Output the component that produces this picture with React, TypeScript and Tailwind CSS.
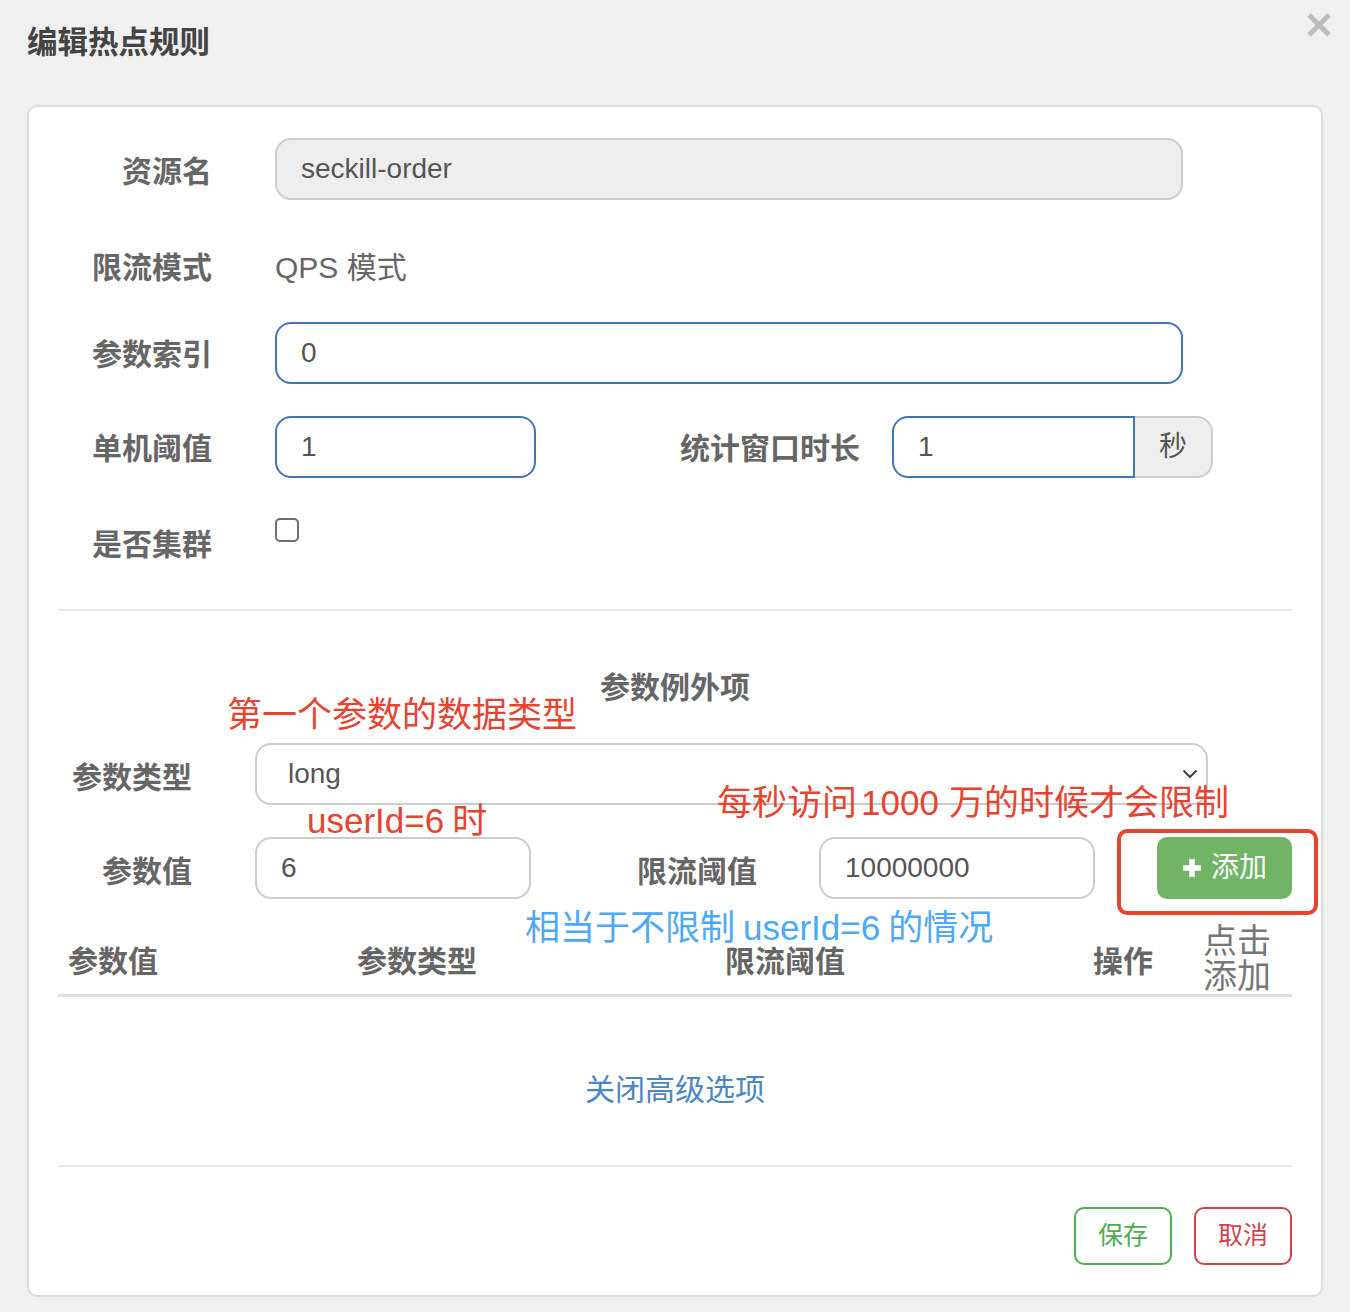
import React from 'react'

const labelCls = 'text-[30px] leading-[40px] font-bold text-[#666] text-right'
const inputBase = 'h-[62px] rounded-[16px] border-2 px-[24px] text-[28px] text-[#555] flex items-center'

function CloseIcon() {
  return (
    <svg width="26" height="26" viewBox="0 0 26 26" className="block">
      <path d="M3 3 L23 23 M23 3 L3 23" stroke="#bdbdbd" strokeWidth="5" strokeLinecap="butt" />
    </svg>
  )
}

function Chevron() {
  return (
    <svg width="16" height="10" viewBox="0 0 16 10" className="block">
      <path d="M1.5 1.5 L8 8 L14.5 1.5" stroke="#444" strokeWidth="2" fill="none" />
    </svg>
  )
}

function Plus() {
  return (
    <svg width="20" height="20" viewBox="0 0 20 20" className="block">
      <path d="M10 1 V19 M1 10 H19" stroke="#fff" strokeWidth="5.5" />
    </svg>
  )
}

export default function App() {
  return (
    <div className="min-h-[1312px] w-full bg-[#f0f0f0] font-['Liberation_Sans','Noto_Sans_CJK_SC',sans-serif]">
      {/* header */}
      <div className="flex h-[105px] items-start justify-between pl-[27px] pr-[18px]">
        <h1 className="mt-[22px] text-[30.5px] leading-[40px] font-bold text-[#444]">编辑热点规则</h1>
        <div className="mt-[12px]">
          <CloseIcon />
        </div>
      </div>

      {/* card */}
      <div className="relative mx-[27px] rounded-[10px] border-2 border-[#dcdcdc] bg-white px-[29px] pt-[31px] pb-[30px]">
        {/* basic fields */}
        <div className="flex h-[62px] items-start">
          <div className={`${labelCls} w-[154px] pt-[14px]`}>资源名</div>
          <div className={`${inputBase} ml-[63px] w-[908px] border-[#cccccc] bg-[#eeeeee]`}>seckill-order</div>
        </div>

        <div className="mt-[34px] flex h-[56px] items-start">
          <div className={`${labelCls} w-[154px] pt-[14px]`}>限流模式</div>
          <div className="ml-[63px] pt-[14px] text-[30px] leading-[40px] text-[#666]">QPS 模式</div>
        </div>

        <div className="mt-[32px] flex h-[62px] items-start">
          <div className={`${labelCls} w-[154px] pt-[13px]`}>参数索引</div>
          <div className={`${inputBase} ml-[63px] w-[908px] border-[#3f76b6] bg-white`}>0</div>
        </div>

        <div className="mt-[32px] flex h-[62px] items-start">
          <div className={`${labelCls} w-[154px] pt-[13px]`}>单机阈值</div>
          <div className={`${inputBase} ml-[63px] w-[261px] border-[#3f76b6] bg-white`}>1</div>
          <div className={`${labelCls} w-[324px] pt-[13px]`}>统计窗口时长</div>
          <div className="ml-[32px] flex">
            <div className="flex h-[62px] w-[243px] items-center rounded-l-[16px] border-2 border-[#3f76b6] px-[24px] text-[28px] text-[#555]">1</div>
            <div className="flex h-[62px] w-[78px] items-center justify-center rounded-r-[16px] border-2 border-l-0 border-[#cccccc] bg-[#eeeeee] text-[28px] text-[#555]">秒</div>
          </div>
        </div>

        <div className="mt-[33px] flex h-[68px] items-start">
          <div className={`${labelCls} w-[154px] pt-[14px]`}>是否集群</div>
          <div className="ml-[63px] mt-[7px] h-[24px] w-[24px] rounded-[5px] border-2 border-[#6f6f6f] bg-white" />
        </div>

        <div className="mt-[30px] h-[2px] bg-[#e8e8e8]" />

        {/* exceptions */}
        <div className="mt-[57px] text-center text-[30px] leading-[40px] font-bold text-[#666]">参数例外项</div>

        <div className="mt-[35px] flex h-[62px] items-start">
          <div className={`${labelCls} w-[134px] pt-[15px]`}>参数类型</div>
          <div className={`${inputBase} ml-[63px] w-[953px] justify-between border-[#cccccc] bg-white pl-[31px] pr-[8px]`}>
            <span>long</span>
            <Chevron />
          </div>
        </div>

        <div className="mt-[32px] flex h-[62px] items-start">
          <div className={`${labelCls} w-[134px] pt-[15px]`}>参数值</div>
          <div className={`${inputBase} ml-[63px] w-[276px] border-[#cccccc] bg-white`}>6</div>
          <div className={`${labelCls} w-[226px] pt-[15px]`}>限流阈值</div>
          <div className={`${inputBase} ml-[62px] w-[276px] border-[#cccccc] bg-white`}>10000000</div>
          <button className="ml-[62px] flex h-[62px] w-[135px] items-center justify-center gap-[9px] rounded-[10px] bg-[#72b466] text-[28px] text-white">
            <Plus />
            <span>添加</span>
          </button>
        </div>

        {/* table header */}
        <div className="mt-[21px] flex h-[77px] items-end border-b-[3px] border-[#dddddd]">
          <div className="w-[289px] pl-[10px] pb-[12px] text-[30px] leading-[40px] font-bold text-[#666]">参数值</div>
          <div className="w-[368px] pl-[10px] pb-[12px] text-[30px] leading-[40px] font-bold text-[#666]">参数类型</div>
          <div className="w-[368px] pl-[10px] pb-[12px] text-[30px] leading-[40px] font-bold text-[#666]">限流阈值</div>
          <div className="w-[110px] pl-[10px] pb-[12px] text-[30px] leading-[40px] font-bold text-[#666]">操作</div>
          <div className="w-[99px] pl-[10px] text-[34px] leading-[35px] text-[#777]">
            点击
            <br />
            添加
          </div>
        </div>

        <div className="mt-[73px] text-center text-[30px] leading-[40px] text-[#4a86c4]">关闭高级选项</div>

        <div className="mt-[55px] h-[2px] bg-[#e8e8e8]" />

        <div className="mt-[40px] flex justify-end gap-[22px]">
          <button className="h-[58px] w-[98px] rounded-[10px] border-2 border-[#4cae4c] bg-white text-[25px] text-[#4cae4c]">保存</button>
          <button className="h-[58px] w-[98px] rounded-[10px] border-2 border-[#d43f4a] bg-white text-[25px] text-[#d43f4a]">取消</button>
        </div>

        {/* annotations */}
        <div className="absolute left-[198px] top-[588px] whitespace-nowrap text-[35px] leading-[40px] text-[#e8432f]">第一个参数的数据类型</div>
        <div className="absolute left-[278px] top-[694px] whitespace-nowrap text-[35px] leading-[40px] text-[#e8432f]">
          userId=6<span className="ml-[8px]">时</span>
        </div>
        <div className="absolute left-[688px] top-[676px] whitespace-nowrap text-[35px] leading-[40px] text-[#e8432f]">
          每秒访问<span className="mx-[4px]">1000</span>
          <span className="ml-[6px]">万的时候才会限制</span>
        </div>
        <div className="absolute left-[496px] top-[801px] whitespace-nowrap text-[35px] leading-[40px] text-[#4ca9f5]">
          相当于不限制<span className="mx-[8px]">userId=6</span>的情况
        </div>
        <div className="absolute left-[1088px] top-[722px] h-[86px] w-[201px] rounded-[10px] border-4 border-[#e8432f]" />
      </div>
    </div>
  )
}
